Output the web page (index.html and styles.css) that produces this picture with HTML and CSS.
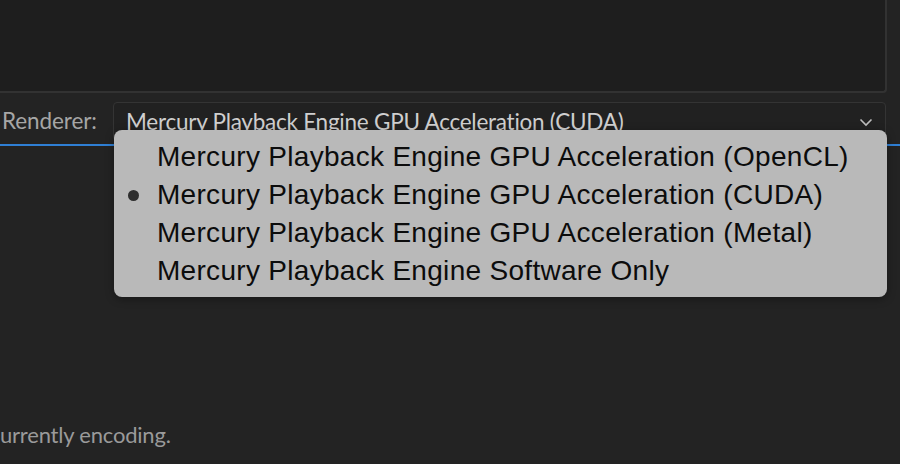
FILE: index.html
```html
<!DOCTYPE html>
<html>
<head>
<meta charset="utf-8">
<link rel="stylesheet" href="styles.css">
</head>
<body>
<div class="screen">
  <div class="panel"></div>
  <div class="row">
    <div class="label">Renderer:</div>
    <div class="select">
      <span class="value">Mercury Playback Engine GPU Acceleration (CUDA)</span>
      <svg class="chev" width="14" height="9" viewBox="0 0 14 9"><path d="M1.5 1.5 L7 7 L12.5 1.5" fill="none" stroke="#bdbdbd" stroke-width="1.6"/></svg>
    </div>
  </div>
  <div class="focus"></div>
  <div class="status">urrently encoding.</div>
  <div class="menu">
    <div class="item">Mercury Playback Engine GPU Acceleration (OpenCL)</div>
    <div class="item checked">Mercury Playback Engine GPU Acceleration (CUDA)</div>
    <div class="item">Mercury Playback Engine GPU Acceleration (Metal)</div>
    <div class="item">Mercury Playback Engine Software Only</div>
  </div>
</div>
</body>
</html>
```
FILE: styles.css
```css
html, body { margin: 0; padding: 0; }
body { background: #232323; width: 900px; height: 464px; overflow: hidden; }
.screen { position: relative; width: 900px; height: 464px; }
.panel {
  width: 889px; height: 91px; margin-left: -4px;
  background: #1e1e1e;
  border-right: 2px solid #323232; border-bottom: 2px solid #323232;
  border-bottom-right-radius: 4px;
}
.row { display: flex; align-items: center; margin-top: 8px; height: 41px; }
.label {
  width: 113px; padding-left: 2px; box-sizing: border-box;
  font-family: Lato, "Open Sans", sans-serif; font-size: 22.5px; color: #a6a6a6;
  letter-spacing: -0.1px; margin-top: -2px;
}
.select {
  width: 773px; height: 39px; box-sizing: border-box;
  border: 1px solid #343434; border-radius: 4px; background: #212121;
  display: flex; align-items: center; justify-content: space-between;
  padding: 0 12px 0 12px;
}
.value { font-family: Lato, "Open Sans", sans-serif; font-size: 22.5px; color: #cfcfcf; letter-spacing: -0.25px; margin-top: 0; }
.chev { margin-top: 2px; }
.focus { height: 2px; background: #2f7fd4; margin-top: 2px; }
.status {
  margin-top: 275px; font-family: Lato, "Open Sans", sans-serif; font-size: 22px; color: #9a9a9a;
  letter-spacing: -0.2px;
}
.menu {
  position: absolute; left: 114px; top: 130px; width: 773px; height: 167px;
  background: #b9b9b9; border-radius: 8px; box-sizing: border-box; padding-top: 8px;
  box-shadow: 0 2px 8px rgba(0,0,0,0.35);
}
.item {
  position: relative; height: 38px; line-height: 38px; padding-left: 43px;
  font-family: "Liberation Sans", Arial, sans-serif; font-size: 28px; color: #0c0c0c;
  letter-spacing: 0.3px;
}
.item.checked::before {
  content: ""; position: absolute; left: 14px; top: 58%; width: 11px; height: 11px;
  margin-top: -8px; border-radius: 50%; background: #2e2e2e;
}
```
